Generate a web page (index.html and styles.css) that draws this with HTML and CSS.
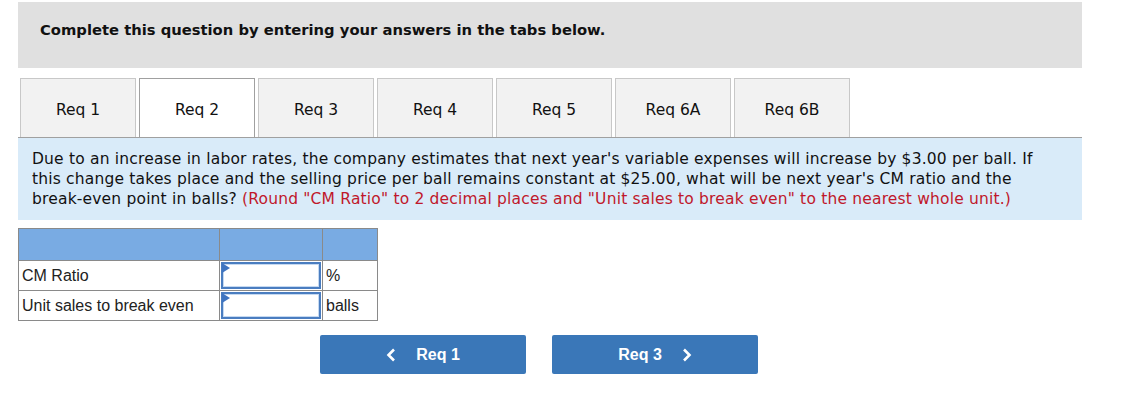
FILE: index.html
```html
<!DOCTYPE html>
<html>
<head>
<meta charset="utf-8">
<link rel="stylesheet" href="styles.css">
</head>
<body>
<div class="wrap">
  <div class="banner">Complete this question by entering your answers in the tabs below.</div>
  <div class="tabs">
    <div class="tab">Req 1</div>
    <div class="tab active">Req 2</div>
    <div class="tab">Req 3</div>
    <div class="tab">Req 4</div>
    <div class="tab">Req 5</div>
    <div class="tab">Req 6A</div>
    <div class="tab">Req 6B</div>
  </div>
  <div class="question">Due to an increase in labor rates, the company estimates that next year's variable expenses will increase by $3.00 per ball. If this change takes place and the selling price per ball remains constant at $25.00, what will be next year's CM ratio and the break-even point in balls? <span class="note">(Round "CM Ratio" to 2 decimal places and "Unit sales to break even" to the nearest whole unit.)</span></div>
  <table class="grid">
    <tr class="head"><td class="c1"></td><td class="c2"></td><td class="c3"></td></tr>
    <tr><td class="c1">CM Ratio</td><td class="c2"><div class="inp"></div></td><td class="c3">%</td></tr>
    <tr><td class="c1">Unit sales to break even</td><td class="c2"><div class="inp"></div></td><td class="c3">balls</td></tr>
  </table>
  <div class="nav">
    <div class="btn"><svg class="chev" width="10" height="14" viewBox="0 0 10 14"><path d="M8 1.5 L2.5 7 L8 12.5" fill="none" stroke="#fff" stroke-width="2.6"/></svg>Req 1</div>
    <div class="btn">Req 3<svg class="chev right" width="10" height="14" viewBox="0 0 10 14"><path d="M2 1.5 L7.5 7 L2 12.5" fill="none" stroke="#fff" stroke-width="2.6"/></svg></div>
  </div>
</div>
</body>
</html>
```
FILE: styles.css
```css
body {
  margin: 0;
  background: #fff;
  font-family: "DejaVu Sans", Verdana, sans-serif;
  color: #111;
}
.wrap {
  margin-left: 18px;
  width: 1064px;
  padding-top: 2px;
}
.banner {
  background: #e0e0e0;
  height: 66px;
  box-sizing: border-box;
  padding: 19px 0 0 22px;
  font-weight: bold;
  font-size: 14.75px;
  color: #111;
}
.tabs {
  display: flex;
  gap: 3px;
  margin-top: 10px;
  padding-left: 2px;
  border-bottom: 1px solid #a0a0a0;
}
.tab {
  width: 116px;
  height: 59px;
  box-sizing: border-box;
  padding-top: 3px;
  background: #f2f2f2;
  border: 1px solid #c8c8c8;
  border-bottom: none;
  display: flex;
  align-items: center;
  justify-content: center;
  font-size: 15.5px;
  color: #111;
}
.tab.active {
  background: #fff;
  border-color: #a0a0a0;
}
.question {
  background: #d9ebf9;
  height: 82px;
  box-sizing: border-box;
  padding: 11px 40px 0 14px;
  font-size: 15.5px;
  letter-spacing: 0.18px;
  line-height: 20px;
  color: #111;
}
.note { color: #c0182b; }
.grid {
  margin-top: 8px;
  border-collapse: collapse;
  font-family: "Liberation Sans", Arial, sans-serif;
  font-size: 16px;
  color: #222;
}
.grid td {
  border: 1px solid #8a8a8a;
  padding: 0;
  height: 29px;
}
.grid .head td {
  background: #79abe3;
  height: 31px;
}
.grid .c1 { width: 197px; padding-left: 3px; }
.grid .c2 { width: 102px; }
.grid .c3 { width: 51px; padding-left: 3px; }
.inp {
  position: relative;
  margin: 0 1px;
  height: 27px;
  box-sizing: border-box;
  border: 2px solid #4a7dc0;
  box-shadow: inset 0 0 0 1px #c5d9f1;
  background: #fff;
}
.inp::before {
  content: "";
  position: absolute;
  left: -1px;
  top: -1px;
  border-top: 5px solid transparent;
  border-bottom: 5px solid transparent;
  border-left: 8px solid #3f74c0;
}
.nav {
  display: flex;
  gap: 26px;
  margin: 14px 0 0 302px;
}
.btn {
  width: 206px;
  height: 39px;
  background: #3a77b8;
  border-radius: 2px;
  color: #fff;
  font-family: "Liberation Sans", Arial, sans-serif;
  font-weight: bold;
  font-size: 16px;
  display: flex;
  align-items: center;
  justify-content: center;
}
.chev {
  margin-right: 20px;
}
.chev.right {
  margin-right: 0;
  margin-left: 20px;
}
```
